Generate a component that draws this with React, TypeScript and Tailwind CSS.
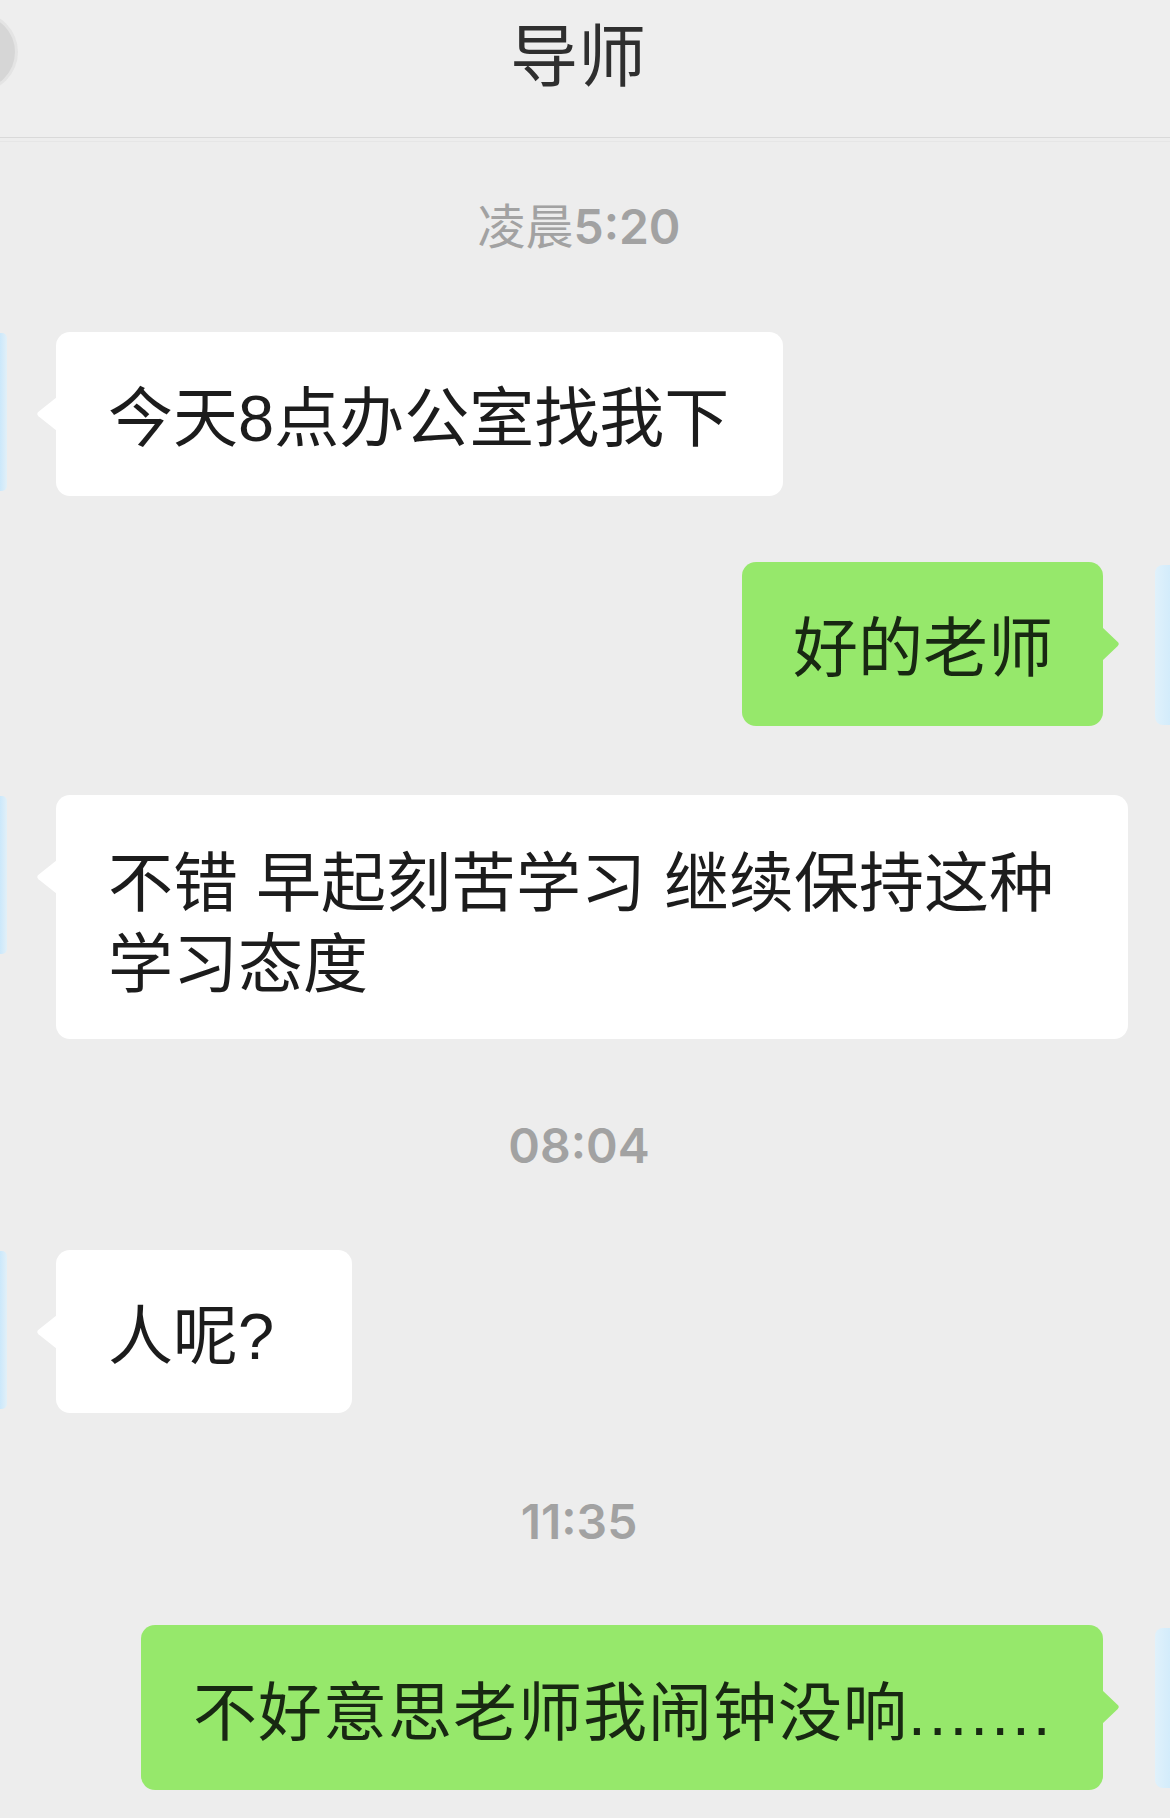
import React from "react";

const TEXT_FONT = "font-['Liberation_Sans','Noto_Sans_CJK_SC',sans-serif]";

function LeftTail() {
  return (
    <svg width="21" height="34" viewBox="0 0 21 34" className="mt-[65px] -mr-px shrink-0 block">
      <path d="M21 0 L2.5 14.8 Q0 17 2.5 19.2 L21 34 Z" fill="#ffffff" />
    </svg>
  );
}

function RightTail() {
  return (
    <svg width="18" height="34" viewBox="0 0 18 34" className="mt-[65px] -ml-px shrink-0 block">
      <path d="M0 0 L15.5 14.8 Q18 17 15.5 19.2 L0 34 Z" fill="#96e86b" />
    </svg>
  );
}

function LeftAvatar() {
  return <div className="w-[7px] h-[158px] mt-px rounded-r-[5px] bg-linear-to-r from-[#cbe8fb] to-[#e2f0f8] shrink-0 mr-[29px]" />;
}

function RightAvatar() {
  return <div className="w-[15px] h-[160px] mt-[3px] rounded-l-[8px] bg-linear-to-r from-[#e0f1fb] to-[#d3ecfb] shrink-0 ml-[35px]" />;
}

function Stamp({ cjk, time, className }: { cjk?: string; time: string; className: string }) {
  return (
    <div className={`h-[50px] flex items-center justify-center pr-[12px] text-[48px] leading-none text-[#a2a2a2] font-['Inter','Noto_Sans_CJK_SC',sans-serif] ${className}`}>
      {cjk && <span className="font-normal">{cjk}</span>}
      <span className="font-semibold">{time}</span>
    </div>
  );
}

export default function App() {
  return (
    <div className={`w-[1170px] h-[1818px] bg-[#ededed] overflow-hidden flex flex-col ${TEXT_FONT}`}>
      {/* Header */}
      <div className="h-[138px] shrink-0 grid grid-cols-[1fr_auto_1fr] pr-[14px] border-b border-[#d9d9d9] bg-[#eeeeee]">
        <div className="flex items-start">
          <div className="-ml-[59px] mt-[15px] w-[74px] h-[74px] rounded-full bg-[#d6d6d6] ring-[3px] ring-[#e4e4e4]" />
        </div>
        <div className="pt-[18px] text-[68px] leading-none text-[#2f2f2f] font-['Noto_Sans_CJK_SC',sans-serif]">导师</div>
        <div />
      </div>
      <div className="h-px bg-[#e6e6e6] mt-[3px]" />

      <Stamp cjk="凌晨" time="5:20" className="mt-[60px]" />

      {/* Bubble 1 */}
      <div className="mt-[80px] flex items-start">
        <LeftAvatar />
        <LeftTail />
        <div className="w-[727px] rounded-[14px] bg-white px-[52px] pt-[46px] pb-[36px] text-[65px] leading-[82px] text-[#1c1c1c] whitespace-nowrap">
          今天8点办公室找我下
        </div>
      </div>

      {/* Bubble 2 */}
      <div className="mt-[66px] flex items-start justify-end">
        <div className="w-[361px] rounded-[14px] bg-[#96e86b] px-[51px] pt-[46px] pb-[36px] text-[65px] leading-[82px] text-[#182812] whitespace-nowrap">
          好的老师
        </div>
        <RightTail />
        <RightAvatar />
      </div>

      {/* Bubble 3 */}
      <div className="mt-[69px] flex items-start">
        <LeftAvatar />
        <LeftTail />
        <div className="w-[1072px] rounded-[14px] bg-white px-[52px] pt-[48px] pb-[34px] text-[65px] leading-[81px] text-[#1c1c1c]">
          不错 早起刻苦学习 继续保持这种学习态度
        </div>
      </div>

      <Stamp time="08:04" className="mt-[82px]" />

      {/* Bubble 4 */}
      <div className="mt-[79px] flex items-start">
        <LeftAvatar />
        <LeftTail />
        <div className="w-[296px] rounded-[14px] bg-white px-[52px] pt-[46px] pb-[35px] text-[65px] leading-[82px] text-[#1c1c1c] whitespace-nowrap">
          人呢?
        </div>
      </div>

      <Stamp time="11:35" className="mt-[84px]" />

      {/* Bubble 5 */}
      <div className="mt-[78px] flex items-start justify-end">
        <div className="w-[962px] rounded-[14px] bg-[#96e86b] px-[52px] pt-[47px] pb-[36px] text-[64px] leading-[82px] text-[#182812] whitespace-nowrap">
          <span className="tracking-[1px]">不好意思老师我闹钟没响</span>
          <span className="tracking-[3px]">.......</span>
        </div>
        <RightTail />
        <RightAvatar />
      </div>
    </div>
  );
}
